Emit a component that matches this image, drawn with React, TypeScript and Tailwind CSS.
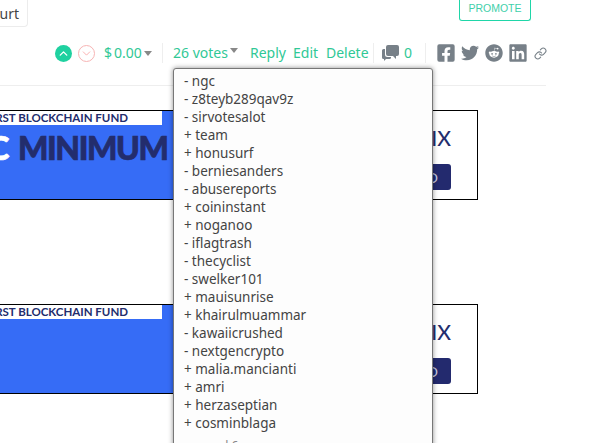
import { ChevronUp, ChevronDown, Link } from "lucide-react";
import { FaFacebookSquare, FaTwitter, FaReddit, FaLinkedin } from "react-icons/fa";

const voters = [
  "- ngc", "- z8teyb289qav9z", "- sirvotesalot", "+ team", "+ honusurf", "- berniesanders", "- abusereports",
  "+ coininstant", "+ noganoo", "- iflagtrash", "- thecyclist", "- swelker101", "+ mauisunrise", "+ khairulmuammar",
  "- kawaiicrushed", "- nextgencrypto", "+ malia.mancianti", "+ amri", "+ herzaseptian", "+ cosminblaga",
];

function Banner({ big }: { big?: boolean }) {
  return (
    <div className="flex h-[90px] w-[478px] border border-l-0 border-black" style={{ fontFamily: "Lato, sans-serif" }}>
      <div className="flex w-[300px] flex-col bg-[#366cf6]">
        <div className="flex h-[14px] w-[162px] items-center justify-end overflow-hidden bg-white pr-[34px] text-[11.5px] leading-none font-bold whitespace-nowrap text-[#232d6d]">
          FIRST BLOCKCHAIN FUND
        </div>
        {big && (
          <div className="mt-[5px] flex h-[36px] items-center overflow-hidden text-[32px] leading-none font-black tracking-[-1.4px] whitespace-nowrap [-webkit-text-stroke:0.7px_currentColor]">
            <span className="flex w-[8px] shrink-0 justify-end text-white">C</span>
            <span className="ml-[10px] text-[#232d6d]">MINIMUM</span>
          </div>
        )}
      </div>
      <div className="flex flex-1 flex-col items-end pt-[15px] pr-[26px]">
        <div className="text-[21px] leading-[24px] font-medium text-[#232d6d]">IX</div>
        <div className="mt-[14px] flex h-[26px] w-[60px] items-center justify-end rounded-[3px] bg-[#232a6e] pr-[13px] text-[14px] text-[#c8cbe0]">
          GO
        </div>
      </div>
    </div>
  );
}

function CommentsIcon() {
  return (
    <svg width="17" height="16" viewBox="0 0 17 16" className="text-[#778088]" fill="currentColor">
      <path d="M6 0h9a2 2 0 0 1 2 2v7a2 2 0 0 1-2 2h-1v3l-3-3H6a2 2 0 0 1-2-2V2a2 2 0 0 1 2-2z" />
      <path d="M3 4v5.500A2.500 2.500 0 0 0 5.500 12H9v.5A1.500 1.500 0 0 1 7.500 14H4l-2 2v-2H1.500A1.500 1.500 0 0 1 0 12.500V5.500A1.500 1.500 0 0 1 1.500 4z" />
    </svg>
  );
}

export default function App() {
  return (
    <div className="h-[443px] w-[589px] overflow-hidden bg-white" style={{ fontFamily: "'Noto Sans', sans-serif" }}>
      <div className="flex h-[27px] w-[531px] items-start justify-between">
        <div className="flex h-[27px] w-[28px] items-center justify-end rounded-br-[4px] border-r border-b border-[#ececec] pr-[8px] text-[14px] text-[#444]">
          urt
        </div>
        <div className="flex h-[21px] w-[72px] items-center justify-center rounded-b-[3px] border border-t-0 border-[#1fd6a8] pb-[3px] text-[10.5px] text-[#3fd0aa]" style={{ fontFamily: "Liberation Sans, sans-serif" }}>
          PROMOTE
        </div>
      </div>

      <div className="mt-[16px] flex h-[20px] items-center pl-[55px] text-[14px] leading-[20px] text-[#30c896]">
        <span className="flex h-[17px] w-[17px] items-center justify-center rounded-full bg-[#1fd1a0] text-white">
          <ChevronUp size={13} strokeWidth={2.5} />
        </span>
        <span className="ml-[6px] flex h-[17px] w-[17px] items-center justify-center rounded-full border border-[#f7b4b4] text-[#f7a0a0]">
          <ChevronDown size={13} strokeWidth={1.5} />
        </span>
        <span className="ml-[9px] flex w-[35px] whitespace-nowrap">$<span className="ml-[2px]">0.00</span></span>
        <span className="mt-[1px] ml-[5px] h-0 w-0 border-x-[4px] border-t-[5px] border-x-transparent border-t-[#888]" />
        <span className="mx-[10px] h-[20px] w-px bg-[#eee]" />
        <div className="relative flex items-center">
          <span className="w-[52px] whitespace-nowrap">26 votes</span>
          <span className="mb-[6px] ml-[5px] h-0 w-0 border-x-[4px] border-t-[5px] border-x-transparent border-t-[#888]" />
          <div className="absolute top-[25px] left-0 z-10 h-[400px] w-[260px] rounded-[3px] border border-[#777] bg-[#fdfdfd] py-[3px] pl-[10px] text-[#444] shadow-[0_0_5px_rgba(0,0,0,0.45)]">
            {voters.map((v) => (
              <div key={v} className="h-[18px] text-[13.5px] leading-[18px] whitespace-nowrap">{v}</div>
            ))}
            <div className="mt-[5px] pl-[10px] text-[12px] leading-[18px] text-[#888]">... and 6 more</div>
          </div>
        </div>
        <span className="ml-[12px] w-[34px]">Reply</span>
        <span className="ml-[9px] w-[24px]">Edit</span>
        <span className="ml-[9px] w-[39px]">Delete</span>
        <span className="mx-[8px] h-[20px] w-px bg-[#eee]" />
        <CommentsIcon />
        <span className="ml-[5px] w-[8px]">0</span>
        <span className="ml-[13px] h-[20px] w-px bg-[#eee]" />
        <div className="ml-[11px] flex items-center gap-[6px] text-[#778088]">
          <FaFacebookSquare size={18} className="scale-110" />
          <FaTwitter size={18} />
          <FaReddit size={18} />
          <FaLinkedin size={18} className="scale-110" />
          <Link size={13} strokeWidth={2} className="ml-[1px]" />
        </div>
      </div>

      <div className="mt-[22px] h-px w-[546px] bg-[#eeeeee]" />

      <div className="mt-[24px]">
        <Banner big />
      </div>
      <div className="mt-[104px]">
        <Banner />
      </div>
    </div>
  );
}
